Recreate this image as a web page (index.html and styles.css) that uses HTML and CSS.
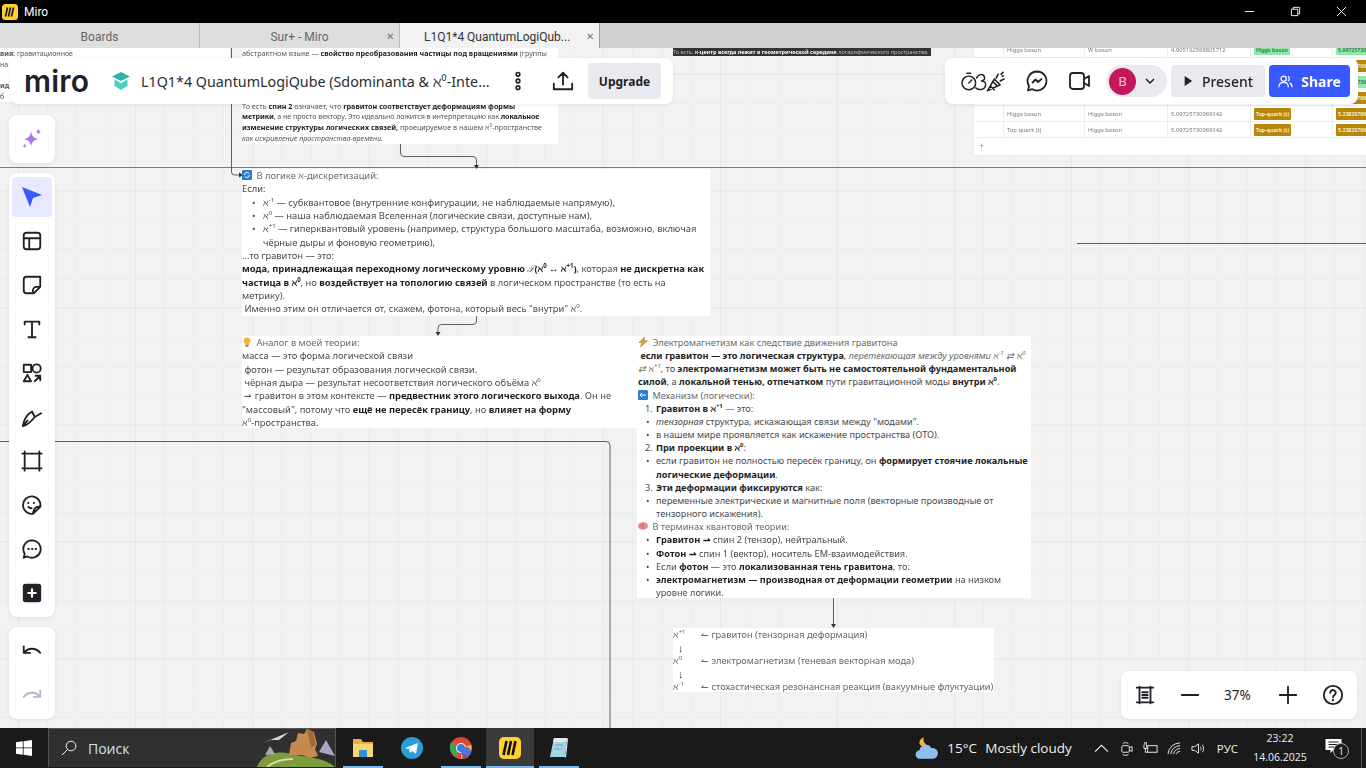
FILE: index.html
```html
<!DOCTYPE html>
<html lang="ru">
<head>
  <meta charset="UTF-8" />
  <meta name="viewport" content="width=device-width, initial-scale=1.0"/>
  <title>Miro</title>
  <link rel="stylesheet" href="styles.css">
</head>
<body>

  <div class="titlebar">
    <svg class="app-icon" viewBox="0 0 16 16"><rect width="16" height="16" rx="3.5" fill="#ffd02f"/><path d="M5.500 3.500 3.500 12.500M8.500 3.500 6.500 12.500M11.500 3.500 9.500 12.500" stroke="#1a1a1a" stroke-width="1.700" fill="none"/></svg>
    <span class="app-name">Miro</span>
    <div class="win-controls">
      <svg viewBox="0 0 12 12"><path d="M1 6h10" stroke="#fff"/></svg>
      <svg viewBox="0 0 12 12"><path d="M1.500 3.500h7v7h-7zM3.500 3.500v-2h7v7h-2" stroke="#fff" fill="none"/></svg>
      <svg viewBox="0 0 12 12"><path d="M1 1l10 10M11 1 1 11" stroke="#fff"/></svg>
    </div>
  </div>

  <div class="tabs">
    <div class="tab">Boards</div>
    <div class="tab">Sur+ - Miro<span class="tab-close">✕</span></div>
    <div class="tab active">L1Q1*4 QuantumLogiQub...<span class="tab-close">✕</span></div>
  </div>

  <main class="canvas">
    <svg class="wires" viewBox="0 48 1366 680">
      <g fill="none" stroke="#5f5f5f" stroke-width="1">
        <path d="M0 167.500H1366" stroke="#7c7c7c"/>
        <path d="M1077 243.500H1366"/>
        <path d="M231.500 48V172q0 3 3 3H240"/>
        <path d="M400.500 144V153q0 3.500 3.500 3.500H473q3.500 0 3.500 3.500V165"/>
        <path d="M476.500 315V321q0 3.500-3.500 3.500H441.500q-3.500 0-3.500 3.500V333"/>
        <path d="M833.500 598V625"/>
        <path d="M0 441.500H606q4 0 4 4V728"/>
      </g>
      <g fill="#333">
        <path d="M243 175l-4-2.500v5z"/>
        <path d="M476.500 169l-2.500-4h5z"/>
        <path d="M438 336l-2.500-4h5z"/>
        <path d="M833.500 628l-2.500-4h5z"/>
      </g>
    </svg>

    <div class="node note-left">
      <p><b>вия:</b> гравитационное</p>
      <p>на</p>
      <p class="gap"><b>ид</b></p>
      <p>б</p>
    </div>

    <div class="node note-top">
      <p>абстрактном языке — <b>свойство преобразования частицы под вращениями</b> (группы</p>
      <p class="gap">То есть <b>спин 2</b> означает, что <b>гравитон соответствует деформациям формы</b></p>
      <p class="tight"><b>метрики</b>, а не просто вектору. Это идеально ложится в интерпретацию как <b>локальное</b></p>
      <p><b>изменение структуры логических связей,</b> проецируемое в нашем <i>ℵ</i><sup>0</sup>-пространстве</p>
      <p><i>как искривление пространства-времени.</i></p>
    </div>

    <div class="node note-strip">То есть. <b>ℵ-центр всегда лежит в геометрической середине</b> логарифмического пространства.</div>

    <div class="node sheet">
      <div class="row cut"><span></span><span>Higgs boson</span><span>W boson</span><span>4.905192598805712</span><span><em class="tag green">Higgs boson</em></span><span><em class="tag green">5.09725730969</em></span></div>
      <div class="row"><span></span><span></span><span></span><span></span><span></span><span><em class="tag gold">5.23820706</em></span></div>
      <div class="row"><span></span><span></span><span></span><span></span><span></span><span><em class="tag green">5.09725730</em></span></div>
      <div class="row"><span></span><span></span><span></span><span></span><span></span><span><em class="tag gold">5.23820706</em></span></div>
      <div class="row"><span></span><span>Higgs boson</span><span>Higgs boson</span><span>5.09725730969342</span><span><em class="tag gold">Top-quark (t)</em></span><span><em class="tag gold">5.23820706</em></span></div>
      <div class="row"><span></span><span>Top quark (t)</span><span>Higgs boson</span><span>5.09725730969342</span><span><em class="tag gold">Top-quark (t)</em></span><span><em class="tag gold">5.23820706</em></span></div>
      <div class="sheet-add">+</div>
    </div>

    <div class="node note note-logic">
      <div><svg class="emoji" viewBox="0 0 10 10"><rect width="10" height="10" rx="1" fill="#2a7fd0"/><path d="M2.500 5a2.500 2.500 0 0 1 4.500-1.500M7.500 5a2.500 2.500 0 0 1-4.500 1.500" stroke="#fff" fill="none"/></svg> <span class="soft">В логике <i>ℵ</i>-дискретизаций:</span></div>
      <div>Если:</div>
      <div class="item wide"><span class="mark">•</span><span><i>ℵ</i><sup>-1</sup> — субквантовое (внутренние конфигурации, не наблюдаемые напрямую),</span></div>
      <div class="item wide"><span class="mark">•</span><span><i>ℵ</i><sup>0</sup> — наша наблюдаемая Вселенная (логические связи, доступные нам),</span></div>
      <div class="item wide"><span class="mark">•</span><span><i>ℵ</i><sup>+1</sup> — гиперквантовый уровень (например, структура большого масштаба, возможно, включая<br>чёрные дыры и фоновую геометрию),</span></div>
      <div>...то гравитон — это:</div>
      <div><b>мода, принадлежащая переходному логическому уровню</b> <i>𝒯</i><b>(<i>ℵ</i><sup>0</sup> ↔ <i>ℵ</i><sup>+1</sup>)</b>, которая <b>не дискретна как<br>частица в <i>ℵ</i><sup>0</sup></b>, но <b>воздействует на топологию связей</b> в логическом пространстве (то есть на<br>метрику).</div>
      <div>&nbsp;Именно этим он отличается от, скажем, фотона, который весь "внутри" <i>ℵ</i><sup>0</sup>.</div>
    </div>

    <div class="node note note-analog">
      <div><svg class="emoji" viewBox="0 0 10 10"><path d="M5 .5a3.300 3.300 0 0 0-2 6V8h4V6.500a3.300 3.300 0 0 0-2-6z" fill="#f5b52e"/><rect x="3.500" y="8" width="3" height="1.800" fill="#7a7f86"/></svg> <span class="soft">Аналог в моей теории:</span></div>
      <div>масса — это форма логической связи</div>
      <div>&nbsp;фотон — результат образования логической связи.</div>
      <div>&nbsp;чёрная дыра — результат несоответствия логического объёма <i>ℵ</i><sup>0</sup></div>
      <div>&nbsp;⇀ гравитон в этом контексте — <b>предвестник этого логического выхода</b>. Он не<br>"массовый", потому что <b>ещё не пересёк границу</b>, но <b>влияет на форму</b><br><i>ℵ</i><sup>0</sup>-пространства.</div>
    </div>

    <div class="node note note-em">
      <div><svg class="emoji" viewBox="0 0 10 10"><path d="M6.500 0 1 5.500h3L2.500 10 9.500 3.800H6z" fill="#e8a91c" stroke="#8a6a2a" stroke-width=".5"/></svg> <span class="soft">Электромагнетизм как следствие движения гравитона</span></div>
      <div>&nbsp;<b>если гравитон — это логическая структура</b>, <i class="soft">перетекающая между уровнями ℵ<sup>-1</sup> ⇄ ℵ<sup>0</sup> ⇄ ℵ<sup>+1</sup></i>, то <b>электромагнетизм может быть не самостоятельной фундаментальной силой</b>, а <b>локальной тенью, отпечатком</b> пути гравитационной моды <b>внутри <i>ℵ</i><sup>0</sup></b>.</div>
      <div><svg class="emoji" viewBox="0 0 10 10"><rect width="10" height="10" rx="1" fill="#2a7fd0"/><path d="M2 5h6M4 3 2 5l2 2" stroke="#fff" fill="none"/></svg> <span class="soft">Механизм (логически):</span></div>
      <div class="item num"><span class="mark">1.</span><span><b>Гравитон в <i>ℵ</i><sup>+1</sup></b> — это:</span></div>
      <div class="item"><span class="mark">•</span><span><i>тензорная</i> структура, искажающая связи между "модами".</span></div>
      <div class="item"><span class="mark">•</span><span>в нашем мире проявляется как искажение пространства (ОТО).</span></div>
      <div class="item num"><span class="mark">2.</span><span><b>При проекции в <i>ℵ</i><sup>0</sup></b>:</span></div>
      <div class="item"><span class="mark">•</span><span>если гравитон не полностью пересёк границу, он <b>формирует стоячие локальные логические деформации</b>.</span></div>
      <div class="item num"><span class="mark">3.</span><span><b>Эти деформации фиксируются</b> как:</span></div>
      <div class="item"><span class="mark">•</span><span>переменные электрические и магнитные поля (векторные производные от тензорного искажения).</span></div>
      <div><svg class="emoji" viewBox="0 0 10 10"><ellipse cx="5" cy="5" rx="5" ry="3.800" fill="#e88a94"/><path d="M5 2v6M2 4c1 1 2 1 3 0" stroke="#b85a66" stroke-width=".6" fill="none"/></svg> <span class="soft">В терминах квантовой теории:</span></div>
      <div class="item"><span class="mark">•</span><span><b>Гравитон ⇀</b> спин 2 (тензор), нейтральный.</span></div>
      <div class="item"><span class="mark">•</span><span><b>Фотон ⇀</b> спин 1 (вектор), носитель ЕМ-взаимодействия.</span></div>
      <div class="item"><span class="mark">•</span><span>Если <b>фотон</b> — это <b>локализованная тень гравитона</b>, то:</span></div>
      <div class="item"><span class="mark">•</span><span><b>электромагнетизм — производная от деформации геометрии</b> на низком уровне логики.</span></div>
    </div>

    <div class="node note note-scale">
      <div class="scale-row"><span class="scale-key"><i>ℵ</i><sup>+1</sup></span><span>↼ гравитон (тензорная деформация)</span></div>
      <div class="scale-down">↓</div>
      <div class="scale-row"><span class="scale-key"><i>ℵ</i><sup>0</sup></span><span>↼ электромагнетизм (теневая векторная мода)</span></div>
      <div class="scale-down">↓</div>
      <div class="scale-row"><span class="scale-key"><i>ℵ</i><sup>-1</sup></span><span>↼ стохастическая резонансная реакция (вакуумные флуктуации)</span></div>
    </div>

    <header class="panel board-bar">
      <span class="logo">miro</span>
      <svg class="cube" viewBox="0 0 20 20"><path d="M10 1 19 5.500 10 10 1 5.500z" fill="#2bb5a8"/><path d="M3.500 8.500 10 12l6.500-3.500V15L10 19l-6.500-4z" fill="#4fd0c2"/></svg>
      <span class="board-name">L1Q1*4 QuantumLogiQube (Sdominanta &amp; <i>ℵ</i><sup>0</sup>-Inte...</span>
      <svg class="ico dots" viewBox="0 0 24 24"><circle cx="12" cy="4" r="2.200"/><circle cx="12" cy="12" r="2.200"/><circle cx="12" cy="20" r="2.200"/></svg>
      <svg class="ico export" viewBox="0 0 24 24"><path d="M12 16V3M7 8l5-5 5 5M2 15v6h20v-6"/></svg>
      <button class="btn upgrade">Upgrade</button>
    </header>

    <div class="panel collab-bar">
      <svg class="ico reactions" viewBox="0 0 46 24"><circle cx="8" cy="14" r="7"/><path d="M8 14l3-3M6 4h4"/><path d="M16 9c1-4 7-5 8-1 .5 2-1 3.500-3 4 3 0 5 2 4 5-1 4-6 5-10 2"/><path d="M27 22l7-12 6 6zM30 17l4 4M33 13l4 4M36 9l2-4M40 12l4-2M41 5l2-2M42 7h1" stroke-width="1.600"/></svg>
      <svg class="ico" viewBox="0 0 24 24"><path d="M12 2.500a9.500 9.500 0 1 1-5 17.600L3 21.500l1-4.500A9.500 9.500 0 0 1 12 2.500z"/><path d="M7.500 13.500l3-3 2.500 2.500 3.500-3"/></svg>
      <svg class="ico" viewBox="0 0 24 24"><rect x="2" y="4" width="14" height="16" rx="3"/><path d="M16 10l5-3v10l-5-3"/></svg>
      <div class="user-pill">
        <span class="avatar">B</span>
        <svg class="chev" viewBox="0 0 12 12"><path d="M2 4l4 4 4-4"/></svg>
      </div>
      <button class="btn present"><svg viewBox="0 0 12 12"><path d="M2 0l9 6-9 6z"/></svg>Present</button>
      <button class="btn share"><svg viewBox="0 0 16 16"><circle cx="6" cy="5" r="2.800"/><path d="M1 14c0-3 2-5 5-5s5 2 5 5M10.500 2.500a2.800 2.800 0 0 1 0 5M12.500 9.500c1.500.7 2.500 2.300 2.500 4.500"/></svg>Share</button>
    </div>

    <div class="panel tool-ai">
      <svg viewBox="0 0 24 24"><defs><linearGradient id="spark" x1="0" y1="1" x2="1" y2="0"><stop offset="0" stop-color="#c77dea"/><stop offset="1" stop-color="#8f6cf5"/></linearGradient></defs><path d="M11 4c1 5 3 7 8 8-5 1-7 3-8 8-1-5-3-7-8-8 5-1 7-3 8-8zM19 1c.4 1.800 1.200 2.600 3 3-1.800.4-2.600 1.200-3 3-.4-1.800-1.200-2.600-3-3 1.800-.4 2.600-1.200 3-3zM4 17c.3 1.400 1 2 2.500 2.500C5 20 4.300 20.600 4 22c-.3-1.400-1-2-2.500-2.500C3 19 3.700 18.400 4 17z" fill="url(#spark)"/></svg>
    </div>

    <nav class="panel toolbar">
      <button class="tool on"><svg viewBox="0 0 24 24"><path d="M2 2l20 8-9 3-3 9z" fill="#3859ff"/></svg></button>
      <button class="tool"><svg viewBox="0 0 24 24"><rect x="3" y="3" width="18" height="18" rx="3"/><path d="M3 9h18M9 9v12"/></svg></button>
      <button class="tool"><svg viewBox="0 0 24 24"><path d="M6 3h15v11l-7 7H6a3 3 0 0 1-3-3V6a3 3 0 0 1 3-3zM21 14h-4a4 4 0 0 0-4 4v3"/></svg></button>
      <button class="tool"><svg viewBox="0 0 24 24"><path d="M8 21h8M12 21V4M4 7V4h16v3"/></svg></button>
      <button class="tool"><svg viewBox="0 0 24 24"><rect x="3" y="3" width="8" height="8"/><circle cx="17" cy="7" r="4.500"/><path d="M7 14l4 7H3zM15 21l6-6M16 15h5v5"/></svg></button>
      <button class="tool"><svg viewBox="0 0 24 24"><path d="M2 22C3 15 7 9 12 6l3 6C11 17 7 21 2 22zM15 12c2-1 4-2 7-4M2 22l5-6"/></svg></button>
      <button class="tool"><svg viewBox="0 0 24 24"><path d="M4 4h16v16H4zM4 1.500V4H1.500M20 1.500V4h2.500M4 22.500V20H1.500M20 22.500V20h2.500"/></svg></button>
      <button class="tool"><svg viewBox="0 0 24 24"><path d="M21 14A9.500 9.500 0 1 0 13 21.500L21 14c-3-.5-7 0-8 7.500z"/><path d="M8 9.500v.5M14 9.500v.5M8 14c1 1.200 2 1.500 3.500 1.500"/></svg></button>
      <button class="tool"><svg viewBox="0 0 24 24"><path d="M12 2.500a9.500 9.500 0 1 1-5 17.600L3 21.500l1-4.500A9.500 9.500 0 0 1 12 2.500z"/><path d="M8 12h.5M12 12h.5M16 12h.5" stroke-width="2.200"/></svg></button>
      <button class="tool"><svg viewBox="0 0 24 24"><rect x="2" y="2" width="20" height="20" rx="3" fill="#1f2128" stroke="none"/><path d="M12 8v8M8 12h8" stroke="#fff" stroke-width="2.400"/></svg></button>
    </nav>

    <div class="panel history">
      <button class="tool"><svg viewBox="0 0 24 24"><path d="M3 7v7h7M3 14c5-6 13-6 18 0"/></svg></button>
      <button class="tool off"><svg viewBox="0 0 24 24"><path d="M21 7v7h-7M21 14c-5-6-13-6-18 0"/></svg></button>
    </div>

    <div class="panel zoom-bar">
      <svg class="ico" viewBox="0 0 24 24"><path d="M6 3v18M18 3v18M3 4h18M3 20h18M9 9h6M9 12h6M9 15h6"/></svg>
      <svg class="ico" viewBox="0 0 24 24"><path d="M3 12h18"/></svg>
      <span class="zoom-val">37%</span>
      <svg class="ico" viewBox="0 0 24 24"><path d="M3 12h18M12 3v18"/></svg>
      <svg class="ico" viewBox="0 0 24 24"><circle cx="12" cy="12" r="10"/><path d="M9 9.500a3 3 0 1 1 4.500 2.700c-1 .6-1.500 1.200-1.500 2.300M12 17v1"/></svg>
    </div>
  </main>

  <footer class="taskbar">
    <svg class="start" viewBox="0 0 16 16"><path d="M0 2.300 6.800 1.300V7.500H0zM7.600 1.200 16 0V7.500H7.600zM0 8.300H6.800V14.700L0 13.700zM7.600 8.300H16V16L7.600 14.800z" fill="#fff"/></svg>
    <div class="search">
      <svg viewBox="0 0 16 16"><circle cx="10" cy="6" r="4.800"/><path d="M6.500 9.500 1 15"/></svg>
      <span>Поиск</span>
      <svg class="search-art" viewBox="0 0 78 39"><path d="M0 39C5 26 18 22 34 26c20 4 34 4 44 13z" fill="#7f9c3c"/><path d="M8 27l5-9 5 8zM62 24l7-12 9 16z" fill="#a9a6c4"/><path d="M32 27l2-12 5-2 2-8 6 1 3-5 7 3 3 12-2 5 3 7-8 2-8-3z" fill="#c58a4d"/><path d="M50 2l6 2 3 13-5 3-2-10z" fill="#a06a38"/><path d="M10 39c6-5 14-8 26-8" stroke="#e6d9a8" stroke-width="2" fill="none"/><path d="M6 15 32 4 22 12l-8 0z" fill="#d6d3e6"/></svg>
    </div>
    <div class="task-apps">
      <div class="app open"><svg viewBox="0 0 24 24"><path d="M2 3h8l2 3h10v5H2z" fill="#e8b33d"/><path d="M2 8h20v13H2z" fill="#f7d774"/><rect x="8" y="14" width="8" height="7" fill="#2f8fd8"/></svg></div>
      <div class="app"><svg viewBox="0 0 24 24"><circle cx="12" cy="12" r="11" fill="#2a9ed8"/><path d="M5 12l13-5-2 11-4-3-2 2-1-4 6-4-7 4z" fill="#fff"/></svg></div>
      <div class="app open"><svg viewBox="0 0 24 24"><circle cx="12" cy="12" r="11" fill="#e0453a"/><path d="M12 12 22 9a11 11 0 0 1-10 14z" fill="#f6c02c"/><path d="M12 12l-5 9A11 11 0 0 1 2 6z" fill="#3aa757"/><circle cx="12" cy="12" r="5" fill="#fff"/><circle cx="12" cy="12" r="4" fill="#3b78e7"/><circle cx="17" cy="16" r="5" fill="#5a6fd6"/><path d="M14 18l6 4-7 1z" fill="#a8425f"/></svg></div>
      <div class="app open current"><svg viewBox="0 0 24 24"><rect x="1" y="1" width="22" height="22" rx="5" fill="#ffd02f"/><path d="M8.500 5 5.500 19M13 5 10 19M17.500 5 14.500 19" stroke="#111" stroke-width="2.600" fill="none"/></svg></div>
      <div class="app open"><svg viewBox="0 0 24 24"><path d="M7 2h13l-2 19H3z" fill="#a5d6df"/><path d="M7 2h13l-1 4H6z" fill="#dfe9ee"/><path d="M8 9h8M7 13h8" stroke="#6aaab8"/><path d="M18 21 20 2l1 1-2 19z" fill="#e6eef0"/></svg></div>
    </div>
    <div class="tray">
      <svg class="weather" viewBox="0 0 24 24"><path d="M5 8a6 6 0 0 0 9 2 6 6 0 0 1-5-8 6 6 0 0 0-4 6z" fill="#f2b63c"/><path d="M6 22a4 4 0 0 1-1-8 6 6 0 0 1 11-2 5 5 0 0 1 2 10z" fill="#8ebfec"/></svg>
      <span class="temp">15°C</span>
      <span class="sky">Mostly cloudy</span>
      <svg class="tray-ico up" viewBox="0 0 14 14"><path d="M1 10l6-6 6 6"/></svg>
      <svg class="tray-ico" viewBox="0 0 16 16"><rect x="3" y="5" width="8" height="7" rx="1"/><path d="M11 7l3-1v5l-3-1M4 2.500c2-1 4-1 6 0M4 14.500c2 1 4 1 6 0"/></svg>
      <svg class="tray-ico" viewBox="0 0 16 16"><rect x="5" y="5" width="10" height="7"/><path d="M1 4v4h3V4M2 1v3M3.500 1v3M2.500 8v4H5"/></svg>
      <svg class="tray-ico" viewBox="0 0 16 16"><path d="M1 14A13 13 0 0 1 14 2M4 14A10 10 0 0 1 14 5M7 14a7 7 0 0 1 7-6M10 14a4 4 0 0 1 4-3"/></svg>
      <svg class="tray-ico" viewBox="0 0 16 16"><path d="M1 6v4h3l4 3V3L4 6zM10 6c1 1 1 3 0 4M12 4c2 2 2 6 0 8"/></svg>
      <span class="lang">РУС</span>
      <div class="clock"><span>23:22</span><span>14.06.2025</span></div>
      <div class="notify">
        <svg viewBox="0 0 16 16"><path d="M0 1h16v11H8l-3 3v-3H0z" fill="#fff"/><path d="M3 4h10M3 6.500h10M3 9h6" stroke="#1a1a1a"/></svg>
        <span class="badge">1</span>
      </div>
      <div class="show-desktop"></div>
    </div>
  </footer>

</body>
</html>
```

FILE: styles.css
```css
* {
  box-sizing: border-box;
}

html, body {
  margin: 0;
  height: 100%;
}

body {
  width: 1366px;
  height: 768px;
  display: flex;
  flex-direction: column;
  overflow: hidden;
  font-family: "Noto Sans", sans-serif;
  background: #f2f2f2;
}

/* window chrome */
.titlebar {
  height: 23px;
  flex: none;
  display: flex;
  align-items: center;
  background: #000;
  color: #fff;
  padding-left: 2px;
}

.app-icon {
  width: 16px;
  height: 16px;
}

.app-name {
  margin-left: 6px;
  font: 12px "Roboto", sans-serif;
}

.win-controls {
  margin-left: auto;
  display: flex;
  gap: 35px;
  padding-right: 19px;
}

.win-controls svg {
  width: 11px;
  height: 11px;
}

.tabs {
  height: 25px;
  flex: none;
  display: flex;
  background: #d2d0d3;
}

.tab {
  width: 200px;
  display: flex;
  align-items: center;
  justify-content: center;
  position: relative;
  background: #dedede;
  border-right: 1px solid #bcbcbc;
  color: #666;
  padding-top: 2px;
  font: 12px "Roboto", sans-serif;
}

.tab.active {
  background: #f2f2f2;
  color: #333;
  border-right: 1px solid #9c9c9c;
  justify-content: flex-start;
  padding-left: 24px;
}

.tab-close {
  position: absolute;
  right: 5px;
  font-size: 10px;
  color: #777;
}

/* board */
.canvas {
  flex: 1;
  position: relative;
  overflow: hidden;
  background-color: #f2f2f2;
  background-image:
    linear-gradient(#e6e6e6 1px, transparent 1px),
    linear-gradient(90deg, #e6e6e6 1px, transparent 1px),
    linear-gradient(#ececec 1px, transparent 1px),
    linear-gradient(90deg, #ececec 1px, transparent 1px);
  background-size: 117px 117px, 117px 117px, 29.25px 29.25px, 29.25px 29.25px;
  background-position: 0 25.5px, 18px 0, 0 25.5px, 18px 0;
}

.wires {
  position: absolute;
  left: 0;
  top: 0;
  width: 1366px;
  height: 680px;
}

.node {
  position: absolute;
  filter: blur(.3px);
}

.note {
  background: #fff;
  color: #4a4a4a;
  font-size: 9.2px;
  line-height: 13.35px;
}

.note b {
  color: #1f1f1f;
}

.soft {
  color: #6a6a6a;
}

sup {
  font-size: .65em;
  line-height: 0;
}

.note-left {
  left: 0;
  top: 0;
  width: 230px;
  height: 54px;
  background: #fff;
  color: #555;
  font-size: 7px;
  line-height: 10.5px;
  padding-top: 1px;
}

.note-left p, .note-top p {
  margin: 0;
}

.note-left .gap {
  margin-top: 11px;
}

.note-top {
  left: 242px;
  top: 0;
  width: 316px;
  height: 96px;
  background: #fff;
  color: #555;
  font-size: 7.2px;
  line-height: 10.7px;
  white-space: nowrap;
}

.note-top b {
  color: #222;
}

.note-top .gap {
  margin-top: 42px;
}

.note-top .tight {
  letter-spacing: -.1px;
}

.note-strip {
  left: 673px;
  top: 0;
  width: 258px;
  height: 8px;
  background: #333;
  color: #bbb;
  font-size: 5.5px;
  line-height: 8px;
  white-space: nowrap;
  overflow: hidden;
}

.note-strip b {
  color: #fff;
}

.note-logic {
  left: 242px;
  top: 121px;
  width: 468px;
  height: 147px;
  font-size: 9.35px;
}

.note-analog {
  left: 242px;
  top: 288px;
  width: 395px;
  height: 92px;
  font-size: 9.35px;
}

.note-em {
  left: 637px;
  top: 288px;
  width: 394px;
  height: 262px;
  padding-left: 1px;
  line-height: 13.15px;
}

.note-scale {
  left: 673px;
  top: 580px;
  width: 321px;
  height: 64px;
  line-height: 13px;
  color: #666;
  font-size: 9.25px;
}

.scale-row {
  display: flex;
  white-space: nowrap;
}

.scale-key {
  width: 28px;
  flex: none;
}

.scale-down {
  padding-left: 5px;
  font-size: 11px;
  color: #444;
}

.emoji {
  width: 10px;
  height: 10px;
  vertical-align: -1px;
  margin-right: 2px;
}

.item {
  display: flex;
}

.mark {
  flex: none;
  width: 18px;
  padding-left: 8px;
}

.item.num .mark {
  padding-left: 7px;
}

.item.wide {
  padding-left: 10px;
}

.item.wide .mark {
  width: 11px;
  padding-left: 0;
}

/* table on the board */
.sheet {
  left: 974px;
  top: 0;
  width: 420px;
  height: 107px;
  background: #fff;
  font-size: 5.8px;
  color: #777;
  border-radius: 0 0 2px 2px;
  box-shadow: 0 0 2px #ddd;
}

.row {
  display: grid;
  grid-template-columns: 30px 81px 83px 83px 82px 82px;
  height: 16px;
  border-bottom: 1px solid #eee;
}

.row.cut {
  height: 10px;
  line-height: 5px;
}

.row span {
  display: flex;
  align-items: center;
  padding-left: 3px;
  border-right: 1px solid #eee;
  white-space: nowrap;
  overflow: hidden;
}

.row.cut span {
  align-items: flex-start;
}

.tag {
  font-style: normal;
  font-weight: 700;
  font-size: 5.2px;
  padding: 2px 2px;
  border-radius: 1px;
  line-height: 8px;
}

.row.cut .tag {
  padding: 0 2px 2px;
  line-height: 5px;
}

.tag.green {
  background: #8ee8a8;
  color: #3f7a52;
}

.tag.gold {
  background: #b8860b;
  color: #f7edd0;
}

.sheet-add {
  padding: 1px 0 0 5px;
  font-size: 9px;
  color: #999;
}

/* floating panels */
.panel {
  position: absolute;
  background: #fff;
  border-radius: 8px;
  box-shadow: 0 1px 4px rgba(5, 0, 56, .08);
}

svg.ico, .tool svg {
  fill: none;
  stroke: #1f2128;
  stroke-width: 2;
  stroke-linejoin: round;
  stroke-linecap: round;
}

.board-bar {
  left: 10px;
  top: 10px;
  width: 663px;
  height: 46px;
  display: flex;
  align-items: center;
  padding-left: 14px;
}

.logo {
  width: 65px;
  font: 600 30px/46px "Inter", sans-serif;
  letter-spacing: .2px;
  color: #1f2128;
}

.cube {
  width: 20px;
  height: 20px;
  margin-left: 22px;
}

.board-name {
  margin-left: 10px;
  width: 367px;
  font-size: 14.3px;
  color: #2a2c33;
  white-space: nowrap;
}

.dots {
  width: 20px;
  height: 24px;
  fill: #1f2128;
  stroke: none;
}

.export {
  width: 22px;
  height: 24px;
  margin-left: 24px;
}

.btn {
  border: 0;
  border-radius: 4px;
  font-family: "Noto Sans", sans-serif;
  display: flex;
  align-items: center;
  justify-content: center;
  padding: 0;
}

.upgrade {
  margin-left: 14px;
  width: 73px;
  height: 36px;
  background: #e9eaef;
  color: #1f2128;
  font-size: 12px;
  font-weight: 700;
}

.collab-bar {
  left: 945px;
  top: 10px;
  width: 413px;
  height: 46px;
  display: flex;
  align-items: center;
  padding-left: 16px;
}

.collab-bar .ico {
  width: 24px;
  height: 24px;
  margin-right: 19px;
  stroke-width: 1.800;
}

.collab-bar .reactions {
  width: 45px;
  margin-right: 19px;
  stroke-width: 1.500;
}

.user-pill {
  width: 61px;
  height: 32px;
  margin-left: -5px;
  margin-right: 4px;
  border-radius: 16px;
  background: #e9eaef;
  display: flex;
  align-items: center;
  padding-left: 3px;
}

.avatar {
  width: 27px;
  height: 27px;
  border-radius: 50%;
  background: #c2185b;
  color: #f7c4d4;
  font-size: 13px;
  display: flex;
  align-items: center;
  justify-content: center;
}

.chev {
  width: 12px;
  height: 12px;
  margin-left: 8px;
  fill: none;
  stroke: #1f2128;
  stroke-width: 1.500;
}

.present {
  width: 94px;
  height: 32px;
  background: #e9eaef;
  color: #1f2128;
  font-size: 14px;
  font-weight: 500;
  gap: 9px;
}

.present svg {
  width: 10px;
  height: 12px;
  fill: #1f2128;
}

.share {
  width: 81px;
  height: 32px;
  margin-left: 4px;
  background: #3859ff;
  color: #fff;
  font-size: 14px;
  font-weight: 700;
  gap: 8px;
}

.share svg {
  width: 15px;
  height: 15px;
  fill: none;
  stroke: #fff;
  stroke-width: 1.300;
}

.tool-ai {
  left: 9px;
  top: 67px;
  width: 46px;
  height: 48px;
  display: flex;
  align-items: center;
  justify-content: center;
}

.tool-ai svg {
  width: 22px;
  height: 22px;
}

.toolbar, .history {
  left: 9px;
  width: 46px;
  display: flex;
  flex-direction: column;
  align-items: center;
  gap: 4px;
  padding-top: 4px;
}

.toolbar {
  top: 125px;
  height: 444px;
}

.history {
  top: 579px;
  height: 92px;
}

.tool {
  width: 40px;
  height: 40px;
  border: 0;
  padding: 0;
  border-radius: 4px;
  background: none;
  display: flex;
  align-items: center;
  justify-content: center;
}

.tool svg {
  width: 22px;
  height: 22px;
}

.tool.on {
  background: #e6e9ff;
}

.tool.on svg {
  width: 24px;
  height: 24px;
  stroke: none;
}

.tool.off svg {
  stroke: #b5b8cc;
}

.zoom-bar {
  left: 1121px;
  top: 623px;
  width: 236px;
  height: 48px;
  display: flex;
  align-items: center;
  padding-left: 13px;
}

.zoom-bar .ico {
  width: 22px;
  height: 22px;
  flex: none;
  margin-right: 23px;
}

.zoom-bar .ico:last-child {
  margin-right: 0;
}

.zoom-val {
  width: 28px;
  margin-right: 25px;
  font-size: 13.500px;
  color: #1f2128;
}

/* taskbar */
.taskbar {
  height: 40px;
  flex: none;
  display: flex;
  background: #1a1a1a;
  color: #f0f0f0;
  font-family: "Open Sans", sans-serif;
}

.start {
  width: 16px;
  height: 16px;
  margin: 12px 16px;
  flex: none;
}

.search {
  width: 288px;
  height: 39px;
  display: flex;
  align-items: center;
  position: relative;
  background: #303030;
  border: 1px solid #555;
  border-bottom: 0;
  padding-left: 12px;
  font-size: 14px;
  color: #cfe3f5;
}

.search > svg:first-child {
  width: 16px;
  height: 16px;
  margin-right: 11px;
  fill: none;
  stroke: #eee;
}

.search-art {
  position: absolute;
  right: 0;
  bottom: 0;
  width: 78px;
  height: 39px;
}

.task-apps {
  display: flex;
  margin-left: 3px;
}

.app {
  width: 48px;
  margin-right: 1px;
  display: flex;
  align-items: center;
  justify-content: center;
  position: relative;
}

.app svg {
  width: 24px;
  height: 24px;
}

.app.open::after {
  content: "";
  position: absolute;
  left: 4px;
  right: 4px;
  bottom: 0;
  height: 2px;
  background: #76b9ed;
}

.app.current {
  background: #3a3a3a;
}

.app.current::after {
  left: 0;
  right: 0;
}

.tray {
  margin-left: auto;
  display: flex;
  align-items: center;
  font-size: 13.500px;
}

.weather {
  width: 26px;
  height: 26px;
  margin-right: 7px;
}

.temp {
  width: 38px;
}

.sky {
  width: 113.500px;
}

.tray-ico {
  width: 15px;
  height: 15px;
  margin-right: 9px;
  fill: none;
  stroke: #eee;
}

.tray-ico.up {
  margin-right: 10px;
  margin-left: -5px;
}

.lang {
  font-size: 11.500px;
  margin-left: 2px;
}

.clock {
  width: 62px;
  margin-left: 11px;
  display: flex;
  flex-direction: column;
  align-items: center;
  font-size: 10.500px;
  line-height: 19px;
}

.notify {
  width: 24px;
  height: 24px;
  margin-left: 14px;
  margin-right: 12px;
  position: relative;
}

.notify svg {
  width: 17px;
  height: 16px;
  margin: 2px 0 0 0;
}

.badge {
  position: absolute;
  left: 8px;
  top: 7px;
  width: 16px;
  height: 16px;
  border-radius: 50%;
  border: 1px solid #aaa;
  background: #1a1a1a;
  font-size: 10px;
  line-height: 14px;
  text-align: center;
}

.show-desktop {
  width: 5px;
  height: 40px;
  border-left: 1px solid #555;
}
```
